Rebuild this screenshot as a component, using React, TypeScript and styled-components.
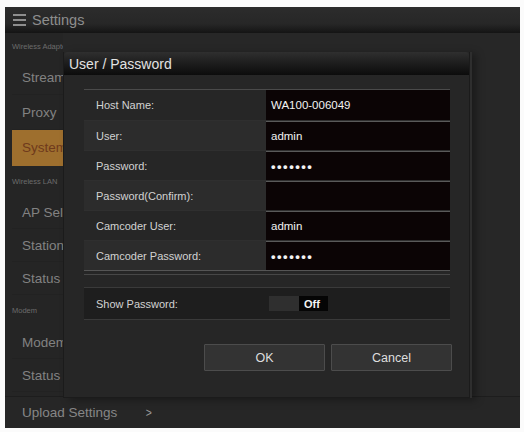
import styled, { createGlobalStyle } from 'styled-components'

const GlobalStyle = createGlobalStyle`
  html, body {
    margin: 0;
    background: #fbfbfb;
  }
  body {
    font-family: 'Liberation Sans', Arial, sans-serif;
  }
`

const Screen = styled.div`
  position: relative;
  margin: 7px 0 0 5px;
  width: 515px;
  height: 421px;
  background: #252525;
  display: flex;
  flex-direction: column;
  overflow: hidden;
`

const Header = styled.div`
  flex: none;
  height: 26px;
  display: flex;
  align-items: center;
  gap: 6px;
  padding-left: 8px;
  background: linear-gradient(#2c2c2c, #272727 65%, #141414);
  color: #8e8e8e;
  font-size: 14.5px;
`

const Main = styled.div`
  flex: 1;
  display: flex;
  min-height: 0;
`

const Sidebar = styled.nav`
  width: 58px;
  flex: none;
  overflow: hidden;
  display: flex;
  flex-direction: column;
`

const SectionLabel = styled.div<{ $height: number }>`
  height: ${({ $height }) => $height}px;
  display: flex;
  align-items: center;
  padding-left: 7px;
  font-size: 7.5px;
  color: #6c6c6c;
  white-space: nowrap;
`

const NavItem = styled.div<{ $active?: boolean; $height: number }>`
  height: ${({ $height }) => $height}px;
  margin-left: 7px;
  padding-left: 10px;
  display: flex;
  align-items: center;
  white-space: nowrap;
  font-size: 13.5px;
  color: ${({ $active }) => ($active ? '#6f3a1c' : '#828282')};
  background: ${({ $active }) => ($active ? '#9e6f2e' : 'transparent')};
  border-bottom: 1px solid ${({ $active }) => ($active ? 'transparent' : '#222222')};
  box-sizing: border-box;
`

const Content = styled.div`
  flex: 1;
  background: #272727;
`

const Footer = styled.div`
  flex: none;
  height: 31px;
  display: flex;
  align-items: center;
  gap: 28px;
  padding-left: 17px;
  border-top: 1px solid #1d1d1d;
  background: #262626;
  color: #868686;
  font-size: 13.5px;
`

const Chevron = styled.span`
  font-size: 13px;
  color: #9a9a9a;
  transform: scaleX(0.8);
`

/* modal */

const Dialog = styled.div`
  position: absolute;
  left: 58px;
  top: 45px;
  width: 405px;
  height: 345px;
  display: flex;
  flex-direction: column;
  background: #262626;
  border: 1px solid #1b1b1b;
  border-top: none;
  box-shadow: 2px 0 0 #2e2e2e, 6px 2px 8px rgba(0, 0, 0, 0.35);
`

const TitleBar = styled.div`
  flex: none;
  height: 23px;
  display: flex;
  align-items: center;
  padding-left: 5px;
  border-radius: 4px 4px 0 0;
  background: linear-gradient(#2f2f2f, #1b1b1b 55%, #0c0c0c);
  color: #e2e2e2;
  font-size: 14px;
`

const DialogBody = styled.div`
  flex: 1;
  display: flex;
  flex-direction: column;
  padding: 14px 19px 0 20px;
`

const Form = styled.div`
  border-top: 1px solid #4a4a4a;
  border-bottom: 1px solid #555555;
`

const Row = styled.div<{ $shade: boolean }>`
  height: 30px;
  box-sizing: border-box;
  display: grid;
  grid-template-columns: 182px 1fr;
  background: ${({ $shade }) => ($shade ? '#2c2c2c' : '#262626')};
  & + & {
    border-top: 1px solid #2f2f2f;
  }
`

const Label = styled.div`
  display: flex;
  align-items: center;
  padding-left: 12px;
  font-size: 11px;
  color: #d2d2d2;
`

const Value = styled.div<{ $secret?: boolean }>`
  display: flex;
  align-items: center;
  padding-left: 5px;
  background: #0b0405;
  border-top: 1px solid #5a5a5a;
  color: #f2f2f2;
  font-size: ${({ $secret }) => ($secret ? '13px' : '11.5px')};
  font-weight: ${({ $secret }) => ($secret ? 700 : 400)};
  letter-spacing: ${({ $secret }) => ($secret ? '1.5px' : '0')};
  ${Row}:first-child & {
    border-top: none;
  }
`

const Divider = styled.div`
  height: 1px;
  margin: 3px 0 12px;
  background: #474747;
`

const ToggleRow = styled.div`
  height: 31px;
  display: grid;
  grid-template-columns: 185px 1fr;
  background: #1e1e1e;
  border-top: 1px solid #3a3a3a;
  border-bottom: 1px solid #3a3a3a;
`

const Toggle = styled.div`
  display: flex;
  align-items: center;
`

const ToggleKnob = styled.div`
  width: 30px;
  height: 15px;
  background: #2f2f2f;
`

const ToggleState = styled.div`
  width: 29px;
  height: 15px;
  display: flex;
  align-items: center;
  padding-left: 5px;
  box-sizing: border-box;
  background: #050505;
  color: #f4f4f4;
  font-size: 11px;
  font-weight: 700;
`

const Buttons = styled.div`
  display: flex;
  justify-content: flex-end;
  gap: 6px;
  margin: 24px -2px 0 0;
`

const Button = styled.button`
  width: 121px;
  height: 27px;
  background: #333333;
  border: 1px solid #4c4c4c;
  border-radius: 1px;
  color: #dedede;
  font-family: 'Liberation Sans', Arial, sans-serif;
  font-size: 12.5px;
`

const MenuIcon = () => (
  <svg width="13" height="12" viewBox="0 0 13 12">
    <rect x="0" y="0" width="13" height="2" fill="#8e8e8e" />
    <rect x="0" y="5" width="13" height="2" fill="#8e8e8e" />
    <rect x="0" y="10" width="13" height="2" fill="#8e8e8e" />
  </svg>
)

const fields = [
  { label: 'Host Name:', value: 'WA100-006049' },
  { label: 'User:', value: 'admin' },
  { label: 'Password:', value: '•••••••', secret: true },
  { label: 'Password(Confirm):', value: '' },
  { label: 'Camcoder User:', value: 'admin' },
  { label: 'Camcoder Password:', value: '•••••••', secret: true },
]

export default function App() {
  return (
    <>
      <GlobalStyle />
      <Screen>
        <Header>
          <MenuIcon />
          Settings
        </Header>
        <Main>
          <Sidebar>
            <SectionLabel $height={27}>Wireless Adapter</SectionLabel>
            <NavItem $height={35}>Streaming</NavItem>
            <NavItem $height={35}>Proxy</NavItem>
            <NavItem $height={36} $active>System</NavItem>
            <SectionLabel $height={30}>Wireless LAN</SectionLabel>
            <NavItem $height={33}>AP Select</NavItem>
            <NavItem $height={33}>Station</NavItem>
            <NavItem $height={33}>Status</NavItem>
            <SectionLabel $height={31}>Modem</SectionLabel>
            <NavItem $height={33}>Modem</NavItem>
            <NavItem $height={33}>Status</NavItem>
          </Sidebar>
          <Content />
        </Main>
        <Footer>
          Upload Settings
          <Chevron>&gt;</Chevron>
        </Footer>

        <Dialog>
          <TitleBar>User / Password</TitleBar>
          <DialogBody>
            <Form>
              {fields.map((f, i) => (
                <Row key={f.label} $shade={i % 2 === 1}>
                  <Label>{f.label}</Label>
                  <Value $secret={f.secret}>{f.value}</Value>
                </Row>
              ))}
            </Form>
            <Divider />
            <ToggleRow>
              <Label>Show Password:</Label>
              <Toggle>
                <ToggleKnob />
                <ToggleState>Off</ToggleState>
              </Toggle>
            </ToggleRow>
            <Buttons>
              <Button>OK</Button>
              <Button>Cancel</Button>
            </Buttons>
          </DialogBody>
        </Dialog>
      </Screen>
    </>
  )
}
